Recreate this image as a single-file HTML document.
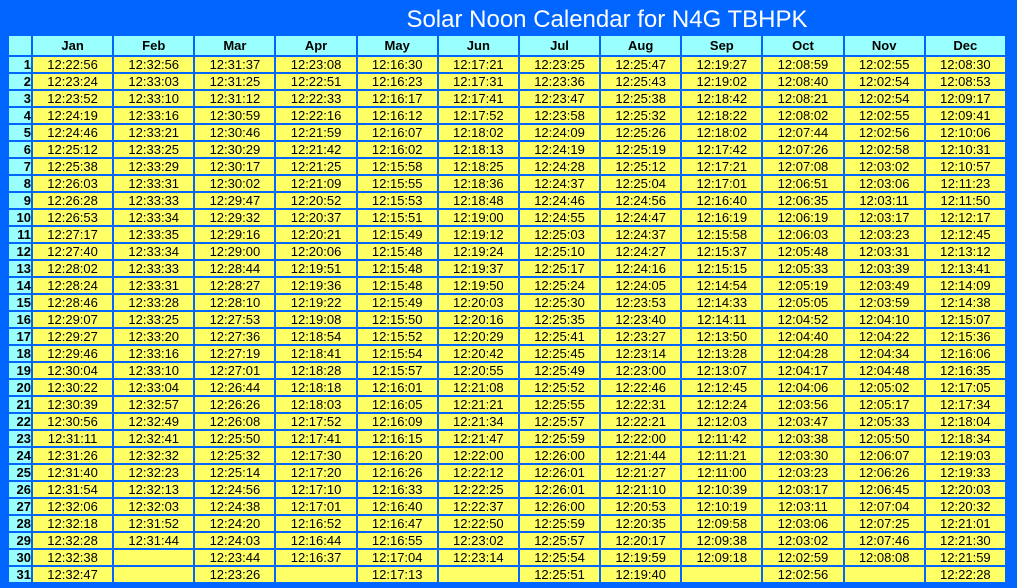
<!DOCTYPE html><html><head><meta charset="utf-8"><style>
body{margin:0;background:#0066ff;width:1017px;height:588px;overflow:hidden;font-family:"Liberation Sans",sans-serif}
h1{position:absolute;left:0;width:1214px;top:5px;margin:0;text-align:center;color:#fff;font-weight:normal;font-size:24px;line-height:30px}
table{position:absolute;left:7px;top:34px;border-spacing:2px;table-layout:fixed;width:1000px}
td,th{padding:0;font-size:13px;height:15px;line-height:15px;text-align:center;background:#ffff66;color:#000;white-space:nowrap;overflow:hidden}
th{background:#99ffff;font-weight:bold;height:19px}
td:first-child{background:#99ffff;font-weight:bold;text-align:right}
col.d{width:22px}
</style></head><body>
<h1>Solar Noon Calendar for N4G TBHPK</h1>
<table><colgroup><col class="d"><col><col><col><col><col><col><col><col><col><col><col><col></colgroup>
<tr><th></th><th>Jan</th><th>Feb</th><th>Mar</th><th>Apr</th><th>May</th><th>Jun</th><th>Jul</th><th>Aug</th><th>Sep</th><th>Oct</th><th>Nov</th><th>Dec</th></tr>
<tr><td>1</td><td>12:22:56</td><td>12:32:56</td><td>12:31:37</td><td>12:23:08</td><td>12:16:30</td><td>12:17:21</td><td>12:23:25</td><td>12:25:47</td><td>12:19:27</td><td>12:08:59</td><td>12:02:55</td><td>12:08:30</td></tr>
<tr><td>2</td><td>12:23:24</td><td>12:33:03</td><td>12:31:25</td><td>12:22:51</td><td>12:16:23</td><td>12:17:31</td><td>12:23:36</td><td>12:25:43</td><td>12:19:02</td><td>12:08:40</td><td>12:02:54</td><td>12:08:53</td></tr>
<tr><td>3</td><td>12:23:52</td><td>12:33:10</td><td>12:31:12</td><td>12:22:33</td><td>12:16:17</td><td>12:17:41</td><td>12:23:47</td><td>12:25:38</td><td>12:18:42</td><td>12:08:21</td><td>12:02:54</td><td>12:09:17</td></tr>
<tr><td>4</td><td>12:24:19</td><td>12:33:16</td><td>12:30:59</td><td>12:22:16</td><td>12:16:12</td><td>12:17:52</td><td>12:23:58</td><td>12:25:32</td><td>12:18:22</td><td>12:08:02</td><td>12:02:55</td><td>12:09:41</td></tr>
<tr><td>5</td><td>12:24:46</td><td>12:33:21</td><td>12:30:46</td><td>12:21:59</td><td>12:16:07</td><td>12:18:02</td><td>12:24:09</td><td>12:25:26</td><td>12:18:02</td><td>12:07:44</td><td>12:02:56</td><td>12:10:06</td></tr>
<tr><td>6</td><td>12:25:12</td><td>12:33:25</td><td>12:30:29</td><td>12:21:42</td><td>12:16:02</td><td>12:18:13</td><td>12:24:19</td><td>12:25:19</td><td>12:17:42</td><td>12:07:26</td><td>12:02:58</td><td>12:10:31</td></tr>
<tr><td>7</td><td>12:25:38</td><td>12:33:29</td><td>12:30:17</td><td>12:21:25</td><td>12:15:58</td><td>12:18:25</td><td>12:24:28</td><td>12:25:12</td><td>12:17:21</td><td>12:07:08</td><td>12:03:02</td><td>12:10:57</td></tr>
<tr><td>8</td><td>12:26:03</td><td>12:33:31</td><td>12:30:02</td><td>12:21:09</td><td>12:15:55</td><td>12:18:36</td><td>12:24:37</td><td>12:25:04</td><td>12:17:01</td><td>12:06:51</td><td>12:03:06</td><td>12:11:23</td></tr>
<tr><td>9</td><td>12:26:28</td><td>12:33:33</td><td>12:29:47</td><td>12:20:52</td><td>12:15:53</td><td>12:18:48</td><td>12:24:46</td><td>12:24:56</td><td>12:16:40</td><td>12:06:35</td><td>12:03:11</td><td>12:11:50</td></tr>
<tr><td>10</td><td>12:26:53</td><td>12:33:34</td><td>12:29:32</td><td>12:20:37</td><td>12:15:51</td><td>12:19:00</td><td>12:24:55</td><td>12:24:47</td><td>12:16:19</td><td>12:06:19</td><td>12:03:17</td><td>12:12:17</td></tr>
<tr><td>11</td><td>12:27:17</td><td>12:33:35</td><td>12:29:16</td><td>12:20:21</td><td>12:15:49</td><td>12:19:12</td><td>12:25:03</td><td>12:24:37</td><td>12:15:58</td><td>12:06:03</td><td>12:03:23</td><td>12:12:45</td></tr>
<tr><td>12</td><td>12:27:40</td><td>12:33:34</td><td>12:29:00</td><td>12:20:06</td><td>12:15:48</td><td>12:19:24</td><td>12:25:10</td><td>12:24:27</td><td>12:15:37</td><td>12:05:48</td><td>12:03:31</td><td>12:13:12</td></tr>
<tr><td>13</td><td>12:28:02</td><td>12:33:33</td><td>12:28:44</td><td>12:19:51</td><td>12:15:48</td><td>12:19:37</td><td>12:25:17</td><td>12:24:16</td><td>12:15:15</td><td>12:05:33</td><td>12:03:39</td><td>12:13:41</td></tr>
<tr><td>14</td><td>12:28:24</td><td>12:33:31</td><td>12:28:27</td><td>12:19:36</td><td>12:15:48</td><td>12:19:50</td><td>12:25:24</td><td>12:24:05</td><td>12:14:54</td><td>12:05:19</td><td>12:03:49</td><td>12:14:09</td></tr>
<tr><td>15</td><td>12:28:46</td><td>12:33:28</td><td>12:28:10</td><td>12:19:22</td><td>12:15:49</td><td>12:20:03</td><td>12:25:30</td><td>12:23:53</td><td>12:14:33</td><td>12:05:05</td><td>12:03:59</td><td>12:14:38</td></tr>
<tr><td>16</td><td>12:29:07</td><td>12:33:25</td><td>12:27:53</td><td>12:19:08</td><td>12:15:50</td><td>12:20:16</td><td>12:25:35</td><td>12:23:40</td><td>12:14:11</td><td>12:04:52</td><td>12:04:10</td><td>12:15:07</td></tr>
<tr><td>17</td><td>12:29:27</td><td>12:33:20</td><td>12:27:36</td><td>12:18:54</td><td>12:15:52</td><td>12:20:29</td><td>12:25:41</td><td>12:23:27</td><td>12:13:50</td><td>12:04:40</td><td>12:04:22</td><td>12:15:36</td></tr>
<tr><td>18</td><td>12:29:46</td><td>12:33:16</td><td>12:27:19</td><td>12:18:41</td><td>12:15:54</td><td>12:20:42</td><td>12:25:45</td><td>12:23:14</td><td>12:13:28</td><td>12:04:28</td><td>12:04:34</td><td>12:16:06</td></tr>
<tr><td>19</td><td>12:30:04</td><td>12:33:10</td><td>12:27:01</td><td>12:18:28</td><td>12:15:57</td><td>12:20:55</td><td>12:25:49</td><td>12:23:00</td><td>12:13:07</td><td>12:04:17</td><td>12:04:48</td><td>12:16:35</td></tr>
<tr><td>20</td><td>12:30:22</td><td>12:33:04</td><td>12:26:44</td><td>12:18:18</td><td>12:16:01</td><td>12:21:08</td><td>12:25:52</td><td>12:22:46</td><td>12:12:45</td><td>12:04:06</td><td>12:05:02</td><td>12:17:05</td></tr>
<tr><td>21</td><td>12:30:39</td><td>12:32:57</td><td>12:26:26</td><td>12:18:03</td><td>12:16:05</td><td>12:21:21</td><td>12:25:55</td><td>12:22:31</td><td>12:12:24</td><td>12:03:56</td><td>12:05:17</td><td>12:17:34</td></tr>
<tr><td>22</td><td>12:30:56</td><td>12:32:49</td><td>12:26:08</td><td>12:17:52</td><td>12:16:09</td><td>12:21:34</td><td>12:25:57</td><td>12:22:21</td><td>12:12:03</td><td>12:03:47</td><td>12:05:33</td><td>12:18:04</td></tr>
<tr><td>23</td><td>12:31:11</td><td>12:32:41</td><td>12:25:50</td><td>12:17:41</td><td>12:16:15</td><td>12:21:47</td><td>12:25:59</td><td>12:22:00</td><td>12:11:42</td><td>12:03:38</td><td>12:05:50</td><td>12:18:34</td></tr>
<tr><td>24</td><td>12:31:26</td><td>12:32:32</td><td>12:25:32</td><td>12:17:30</td><td>12:16:20</td><td>12:22:00</td><td>12:26:00</td><td>12:21:44</td><td>12:11:21</td><td>12:03:30</td><td>12:06:07</td><td>12:19:03</td></tr>
<tr><td>25</td><td>12:31:40</td><td>12:32:23</td><td>12:25:14</td><td>12:17:20</td><td>12:16:26</td><td>12:22:12</td><td>12:26:01</td><td>12:21:27</td><td>12:11:00</td><td>12:03:23</td><td>12:06:26</td><td>12:19:33</td></tr>
<tr><td>26</td><td>12:31:54</td><td>12:32:13</td><td>12:24:56</td><td>12:17:10</td><td>12:16:33</td><td>12:22:25</td><td>12:26:01</td><td>12:21:10</td><td>12:10:39</td><td>12:03:17</td><td>12:06:45</td><td>12:20:03</td></tr>
<tr><td>27</td><td>12:32:06</td><td>12:32:03</td><td>12:24:38</td><td>12:17:01</td><td>12:16:40</td><td>12:22:37</td><td>12:26:00</td><td>12:20:53</td><td>12:10:19</td><td>12:03:11</td><td>12:07:04</td><td>12:20:32</td></tr>
<tr><td>28</td><td>12:32:18</td><td>12:31:52</td><td>12:24:20</td><td>12:16:52</td><td>12:16:47</td><td>12:22:50</td><td>12:25:59</td><td>12:20:35</td><td>12:09:58</td><td>12:03:06</td><td>12:07:25</td><td>12:21:01</td></tr>
<tr><td>29</td><td>12:32:28</td><td>12:31:44</td><td>12:24:03</td><td>12:16:44</td><td>12:16:55</td><td>12:23:02</td><td>12:25:57</td><td>12:20:17</td><td>12:09:38</td><td>12:03:02</td><td>12:07:46</td><td>12:21:30</td></tr>
<tr><td>30</td><td>12:32:38</td><td></td><td>12:23:44</td><td>12:16:37</td><td>12:17:04</td><td>12:23:14</td><td>12:25:54</td><td>12:19:59</td><td>12:09:18</td><td>12:02:59</td><td>12:08:08</td><td>12:21:59</td></tr>
<tr><td>31</td><td>12:32:47</td><td></td><td>12:23:26</td><td></td><td>12:17:13</td><td></td><td>12:25:51</td><td>12:19:40</td><td></td><td>12:02:56</td><td></td><td>12:22:28</td></tr>
</table></body></html>
